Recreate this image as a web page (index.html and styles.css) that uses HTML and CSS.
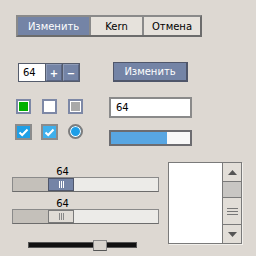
FILE: index.html
```html
<!DOCTYPE html>
<html lang="ru">
<head>
    <meta charset="UTF-8">
    <title>Widgets</title>
    <link rel="stylesheet" href="styles.css">
</head>
<body>
    <div class="page">

        <div class="tabs">
            <div class="tab active">Изменить</div>
            <div class="tab">Kern</div>
            <div class="tab">Отмена</div>
        </div>

        <div class="row-controls">
            <div class="spin">
                <div class="spin-value">64</div>
                <div class="spin-btn">+</div>
                <div class="spin-btn">−</div>
            </div>
            <div class="btn">Изменить</div>
        </div>

        <div class="row-mid">
            <div class="checks">
                <div class="check"><span class="mark green"></span></div>
                <div class="check"></div>
                <div class="check"><span class="mark grey"></span></div>
                <div class="check on">
                    <svg width="11" height="9" viewBox="0 0 11 9"><path d="M1.5 4.5 L4.2 7 L9.5 1.5" fill="none" stroke="#fff" stroke-width="2"/></svg>
                </div>
                <div class="check on hover">
                    <svg width="11" height="9" viewBox="0 0 11 9"><path d="M1.5 4.5 L4.2 7 L9.5 1.5" fill="none" stroke="#fff" stroke-width="2"/></svg>
                </div>
                <div class="radio"></div>
            </div>
            <div class="fields">
                <div class="text-input">64</div>
                <div class="progress"><div class="progress-fill" style="width: 71%"></div></div>
            </div>
        </div>

        <div class="row-lower">
            <div class="sliders">
                <div class="slider-label">64</div>
                <div class="hslider">
                    <div class="hs-done"></div>
                    <div class="hs-thumb blue"><span></span></div>
                    <div class="hs-rest"></div>
                </div>
                <div class="slider-label">64</div>
                <div class="hslider">
                    <div class="hs-done"></div>
                    <div class="hs-thumb"><span></span></div>
                    <div class="hs-rest"></div>
                </div>
                <div class="thin-slider">
                    <div class="thin-track"></div>
                    <div class="thin-thumb"></div>
                </div>
            </div>
            <div class="listbox">
                <div class="list-area"></div>
                <div class="vscroll">
                    <div class="vs-btn"><svg width="9" height="5" viewBox="0 0 9 5"><path d="M0 5 L4.5 0 L9 5 Z" fill="#555"/></svg></div>
                    <div class="vs-track"></div>
                    <div class="vs-thumb">
                        <span></span><span></span><span></span>
                    </div>
                    <div class="vs-btn"><svg width="9" height="5" viewBox="0 0 9 5"><path d="M0 0 L9 0 L4.5 5 Z" fill="#555"/></svg></div>
                </div>
            </div>
        </div>

    </div>
</body>
</html>
```

FILE: styles.css
```css
body {
    margin: 0;
    background-color: #ddd8d2;
    font-family: "DejaVu Sans", sans-serif;
    font-size: 10px;
    color: #000;
}
.page {
    width: 256px;
    height: 256px;
    padding-top: 15px;
    box-sizing: border-box;
}
.tabs {
    display: flex;
    margin-left: 16px;
    width: 186px;
    height: 22px;
    box-sizing: border-box;
    border: 2px solid #8a8a8a;
    border-bottom-color: #6c6c6c;
    border-right-color: #6c6c6c;
    background-color: #e6e2dc;
}
.tab {
    display: flex;
    align-items: center;
    justify-content: center;
    border-left: 2px solid #8a8a8a;
    background-color: #e6e2dc;
}
.tab:nth-child(1) {
    width: 71px;
    border-left: none;
}
.tab:nth-child(2) {
    width: 51px;
}
.tab:nth-child(3) {
    flex: 1;
}
.tab.active {
    background-color: #7484a6;
    color: #fff;
}
.row-controls {
    display: flex;
    margin-top: 25px;
    height: 20px;
}
.spin {
    display: flex;
    margin-left: 18px;
    margin-top: 1px;
    height: 19px;
    border: 1px solid #555c6c;
    box-sizing: border-box;
    background-color: #555c6c;
    gap: 1px;
}
.spin-value {
    width: 26px;
    background-color: #fff;
    padding-left: 4px;
    box-sizing: border-box;
    line-height: 17px;
}
.spin-btn {
    width: 16px;
    background-color: #7484a6;
    color: #fff;
    text-align: center;
    line-height: 17px;
    font-weight: bold;
    border: 1px solid #8f9cb8;
    border-right-color: #5a6582;
    border-bottom-color: #5a6582;
    box-sizing: border-box;
}
.btn {
    margin-left: 33px;
    width: 75px;
    height: 20px;
    box-sizing: border-box;
    background-color: #7484a6;
    color: #fff;
    border: 1px solid #4f566a;
    border-bottom-width: 2px;
    border-right-width: 2px;
    display: flex;
    align-items: center;
    justify-content: center;
}
.row-mid {
    display: flex;
    margin-top: 15px;
}
.checks {
    display: grid;
    grid-template-columns: 15px 15px 15px;
    grid-auto-rows: 15px;
    column-gap: 11px;
    row-gap: 10px;
    margin-left: 16px;
    margin-top: 2px;
}
.check {
    width: 15px;
    height: 15px;
    box-sizing: border-box;
    border: 2px solid #7d88a6;
    background-color: #fff;
    display: flex;
    align-items: center;
    justify-content: center;
}
.check .mark {
    width: 9px;
    height: 9px;
}
.mark.green {
    background-color: #00b000;
}
.mark.grey {
    background-color: #a9a9a9;
}
.check.on {
    width: 17px;
    height: 16px;
    margin-left: -1px;
    background-color: #1e9fe6;
    border: 2px solid #8b8b8b;
}
.check.on.hover {
    background-color: #3fb0ec;
}
.radio {
    width: 15px;
    height: 15px;
    box-sizing: border-box;
    border-radius: 50%;
    border: 2px solid #7d7d7d;
    background-color: #1c9ee8;
    box-shadow: inset 0 0 0 1px #fff;
}
.fields {
    margin-left: 26px;
    display: flex;
    flex-direction: column;
}
.text-input {
    width: 83px;
    height: 21px;
    box-sizing: border-box;
    border: 2px solid #8a8a8a;
    background-color: #fff;
    padding-left: 5px;
    line-height: 17px;
}
.progress {
    margin-top: 12px;
    width: 83px;
    height: 16px;
    box-sizing: border-box;
    border: 2px solid #6c6c70;
    background-color: #f8f8f8;
}
.progress-fill {
    height: 100%;
    background-color: #58a6e2;
}
.row-lower {
    display: flex;
    align-items: flex-start;
    margin-top: 16px;
}
.sliders {
    margin-left: 12px;
    width: 147px;
}
.slider-label {
    text-align: center;
    height: 9px;
    line-height: 9px;
    margin-top: 5px;
    margin-left: 4px;
    margin-bottom: 1px;
    width: 93px;
}
.slider-label + .hslider + .slider-label {
    margin-top: 7px;
}
.hslider {
    display: flex;
    height: 15px;
    box-sizing: border-box;
    border: 1px solid #8a8a8a;
    border-bottom-color: #6c6c6c;
}
.hs-done {
    width: 35px;
    background-color: #c4c0ba;
}
.hs-thumb {
    width: 26px;
    box-sizing: border-box;
    border: 1px solid #7a7a7a;
    background-color: #e0dcd6;
    display: flex;
    align-items: center;
    justify-content: center;
}
.hs-thumb span {
    width: 5px;
    height: 7px;
    border-left: 1px solid #888;
    border-right: 1px solid #888;
    box-sizing: border-box;
    background: linear-gradient(#888, #888) center / 1px 100% no-repeat;
}
.hs-thumb.blue {
    background-color: #7484a6;
    border-color: #4f566a;
}
.hs-thumb.blue span {
    border-color: #fff;
    background: linear-gradient(#fff, #fff) center / 1px 100% no-repeat;
}
.hs-rest {
    flex: 1;
    background-color: #ecebe8;
}
.listbox {
    display: flex;
    margin-left: 9px;
    width: 74px;
    height: 82px;
    box-sizing: border-box;
    border: 1px solid #7a7a7a;
    box-shadow: 1px 1px 0 #f2f0ec;
}
.list-area {
    flex: 1;
    background-color: #fff;
    border-right: 1px solid #7a7a7a;
}
.vscroll {
    width: 18px;
    display: flex;
    flex-direction: column;
    background-color: #e2ded8;
}
.vs-btn {
    height: 18px;
    display: flex;
    align-items: center;
    justify-content: center;
}
.vs-track {
    height: 15px;
    background-color: #c8c6c3;
    border-top: 1px solid #7a7a7a;
    border-bottom: 1px solid #7a7a7a;
}
.vs-thumb {
    flex: 1;
    display: flex;
    flex-direction: column;
    align-items: center;
    justify-content: center;
    gap: 2px;
    border-bottom: 1px solid #7a7a7a;
}
.vs-thumb span {
    width: 11px;
    height: 1px;
    background-color: #777;
}
.thin-slider {
    position: relative;
    margin-top: 16px;
    margin-left: 16px;
    width: 109px;
    height: 11px;
}
.thin-track {
    position: absolute;
    top: 2px;
    left: 0;
    right: 0;
    height: 6px;
    box-sizing: border-box;
    background-color: #111;
    border: 1px solid #555;
}
.thin-thumb {
    position: absolute;
    top: 0;
    left: 65px;
    width: 14px;
    height: 11px;
    box-sizing: border-box;
    background-color: #d8d4ce;
    border: 1px solid #888;
    border-bottom-color: #555;
}
```
